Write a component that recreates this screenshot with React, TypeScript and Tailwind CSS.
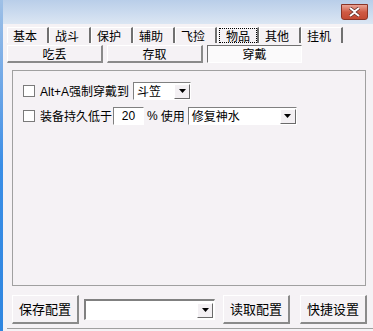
import React from "react";

const font = { fontFamily: '"Noto Sans CJK SC", "Liberation Sans", sans-serif' };

const tabs = ["基本", "战斗", "保护", "辅助", "飞捡", "物品", "其他", "挂机"];
const subTabs = ["吃丢", "存取", "穿戴"];

function Checkbox() {
  return <div className="w-[12px] h-[12px] border border-[#7a7a7a] bg-white shrink-0" />;
}

function Arrow() {
  return (
    <div className="w-[16px] h-[15px] bg-[#f3f0f3] border-t border-l border-t-white border-l-white border-r border-b border-r-[#6a6a6a] border-b-[#6a6a6a] flex items-center justify-center shrink-0">
      <svg width="7" height="4" viewBox="0 0 7 4">
        <path d="M0 0h7L3.5 4z" fill="#000" />
      </svg>
    </div>
  );
}

function Combo({ w, text }: { w: string; text: string }) {
  return (
    <div className={`${w} h-[18px] bg-white border-t border-l border-t-[#808080] border-l-[#808080] border-r border-b border-r-white border-b-white flex items-center`}>
      <span className="flex-1 pl-[3px] text-[12px] leading-none text-black">{text}</span>
      <Arrow />
    </div>
  );
}

function RaisedButton({ label }: { label: string }) {
  return (
    <button className="w-[67px] h-[29px] bg-[#f5f2f5] border-t border-l border-t-white border-l-white border-r-2 border-b-2 border-r-[#8a8a8a] border-b-[#8a8a8a] text-[13px] text-black flex items-center justify-center">
      {label}
    </button>
  );
}

export default function App() {
  return (
    <div className="w-[373px] h-[331px] flex bg-[#f5f2f5] overflow-hidden" style={font}>
      {/* 왼쪽 파란 테두리 */}
      <div className="w-[3px] bg-gradient-to-b from-[#9fc0e6] via-[#3a8ee6] to-[#2f86e0]" />

      <div className="flex-1 flex flex-col">
        {/* 제목 표시줄 */}
        <div className="h-[24px] bg-gradient-to-b from-[#b9cee9] to-[#dbe6f3] flex justify-end">
          <div className="mt-[4px] mr-[5px] w-[27px] h-[16px] rounded-b-[3px] border border-[#8a3426] bg-gradient-to-b from-[#e9a496] via-[#cf5a44] to-[#c44a33] flex items-center justify-center">
            <svg width="13" height="10" viewBox="0 0 13 10">
              <path d="M2 1l4.5 3.5L11 1M2 9l4.5-3.5L11 9" stroke="#5a2a24" strokeWidth="3.4" fill="none" />
              <path d="M2 1l4.5 3.5L11 1M2 9l4.5-3.5L11 9" stroke="#fff" strokeWidth="2" fill="none" />
            </svg>
          </div>
        </div>

        <div className="flex-1 flex flex-col pl-[4px]">
          {/* 상단 탭 */}
          <div className="flex mt-[3px] h-[16px]">
            {tabs.map((t) => (
              <div
                key={t}
                className="w-[42px] h-[16px] border-l border-t border-l-white border-t-white border-r-2 border-r-[#707070] flex items-center text-[12px] leading-none text-black"
              >
                {t === "物品" ? (
                  <span className="ml-[1px] w-[39px] h-[15px] border border-dotted border-black flex items-center pl-[6px]">
                    {t}
                  </span>
                ) : (
                  <span className="pl-[5px]">{t}</span>
                )}
              </div>
            ))}
          </div>

          {/* 하위 탭 */}
          <div className="flex gap-[4px] mt-[2px]">
            {subTabs.map((t) =>
              t === "穿戴" ? (
                <div
                  key={t}
                  className="w-[95px] h-[18px] bg-[#fbfafb] border-t border-l border-t-[#707070] border-l-[#707070] border-r border-b border-r-white border-b-white flex items-center justify-center text-[12px] text-black"
                >
                  {t}
                </div>
              ) : (
                <div
                  key={t}
                  className="w-[96px] h-[18px] border-t border-l border-t-white border-l-white border-r-2 border-b-2 border-r-[#8a8a8a] border-b-[#8a8a8a] flex items-center justify-center text-[12px] text-black"
                >
                  {t}
                </div>
              )
            )}
          </div>

          {/* 그룹 박스 */}
          <div className="ml-[5px] mt-[7px] w-[354px] h-[216px] border border-[#a0a0a0] pt-[11px] pl-[10px] flex flex-col gap-[7px] text-[12px] text-black">
            <div className="flex items-center h-[18px]">
              <Checkbox />
              <span className="ml-[5px] leading-none">
                <span style={{ fontFamily: '"Liberation Sans", sans-serif' }}>Alt+A</span>强制穿戴到
              </span>
              <div className="ml-[4px]">
                <Combo w="w-[58px]" text="斗笠" />
              </div>
            </div>
            <div className="flex items-center h-[18px]">
              <Checkbox />
              <span className="ml-[5px] leading-none">装备持久低于</span>
              <div className="ml-[1px] w-[31px] h-[18px] bg-white border-t border-l border-t-[#808080] border-l-[#808080] border-r border-b border-r-white border-b-white flex items-center justify-center leading-none">
                <span style={{ fontFamily: '"Liberation Sans", sans-serif' }}>20</span>
              </div>
              <span className="ml-[3px] leading-none" style={{ fontFamily: '"Liberation Sans", sans-serif' }}>
                %
              </span>
              <span className="ml-[3px] leading-none">使用</span>
              <div className="ml-[3px]">
                <Combo w="w-[109px]" text="修复神水" />
              </div>
            </div>
          </div>

          {/* 하단 버튼 */}
          <div className="flex items-center mt-[9px] ml-[5px]">
            <RaisedButton label="保存配置" />
            <div className="ml-[5px] w-[131px] h-[21px] bg-white border-t-2 border-l-2 border-t-[#808080] border-l-[#808080] border-r border-b border-r-white border-b-white flex items-center justify-end pr-[1px]">
              <Arrow />
            </div>
            <div className="ml-[8px]">
              <RaisedButton label="读取配置" />
            </div>
            <div className="ml-[10px]">
              <RaisedButton label="快捷设置" />
            </div>
          </div>

          <div className="mt-auto h-[3px] border-t border-[#a0a0a0]" />
        </div>
      </div>
    </div>
  );
}
